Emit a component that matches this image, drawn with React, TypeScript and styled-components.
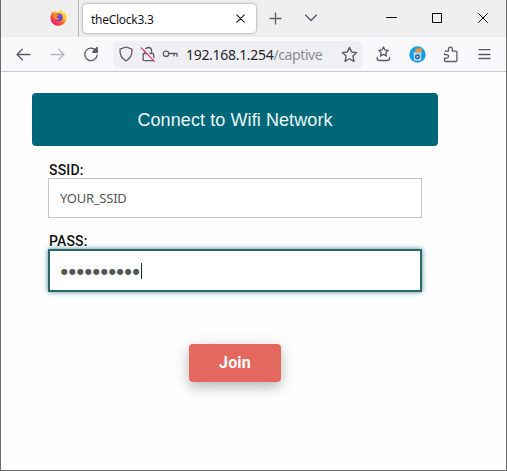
import React from "react";
import styled, { createGlobalStyle } from "styled-components";

const GlobalStyle = createGlobalStyle`
  body { margin: 0; overflow: hidden; background: #fff; }
  * { box-sizing: border-box; }
`;

const Window = styled.div`
  width: 507px;
  height: 471px;
  display: flex;
  flex-direction: column;
  background: #fefefe;
  border: solid #6b6b6b;
  border-width: 0 1px 1px 1px;
  overflow: hidden;
`;

const TabStrip = styled.div`
  flex: none;
  height: 37px;
  display: flex;
  align-items: flex-start;
  background: #efefef;
`;

const PinnedArea = styled.div`
  width: 78px;
  height: 37px;
  display: flex;
  padding: 9px 0 0 49px;
  border-right: 1px solid #b9b9b9;
`;

const Tab = styled.div`
  width: 173px;
  height: 29px;
  margin: 4px 0 0 4px;
  padding: 0 11px 0 8px;
  display: flex;
  align-items: center;
  justify-content: space-between;
  background: #fff;
  border-radius: 4px;
  box-shadow: 0 0 3px rgba(0, 0, 0, 0.42);
`;

const TabTitle = styled.span`
  font: 12px/16px "Noto Sans", sans-serif;
  letter-spacing: -0.27px;
  padding-top: 2px;
  color: #15141a;
`;

const Glyph = styled.svg<{ $left?: number; $top?: number }>`
  flex: none;
  display: block;
  margin-left: ${(p) => p.$left ?? 0}px;
  margin-top: ${(p) => p.$top ?? 0}px;
  fill: none;
  stroke: #5b5b66;
  stroke-width: 1.3;
  stroke-linecap: round;
  stroke-linejoin: round;
`;

const Toolbar = styled.div`
  flex: none;
  height: 35px;
  display: flex;
  align-items: center;
  background: #f9f9fb;
  border-bottom: 1px solid #cacaca;
`;

const AddressBar = styled.div`
  width: 249px;
  height: 27px;
  margin-left: 14px;
  padding-left: 5px;
  display: flex;
  align-items: center;
  background: #f0f0f4;
  border-radius: 4px;
`;

const Url = styled.div`
  width: 138px;
  margin-left: 8px;
  padding-top: 1px;
  white-space: nowrap;
  font: 14px/20px "Noto Sans", sans-serif;
  letter-spacing: -0.3px;
  color: #25242c;
`;

const UrlPath = styled.span`
  color: #8b8b93;
  letter-spacing: -0.4px;
`;

const Page = styled.main`
  flex: 1;
  padding: 21px 0 0 31px;
`;

const Banner = styled.h1`
  width: 406px;
  height: 53px;
  margin: 0 0 16px;
  border-radius: 4px;
  background: #006778;
  color: #ebf6f7;
  font: 400 18px/54px "Liberation Sans", Arial, sans-serif;
  letter-spacing: 0.09px;
  text-align: center;
`;

const Form = styled.div`
  width: 374px;
  margin-left: 16px;
  display: flex;
  flex-direction: column;
`;

const Label = styled.label<{ $spacing: number }>`
  height: 16px;
  padding-left: 1px;
  font: 500 14px/17px Roboto, sans-serif;
  letter-spacing: ${(p) => p.$spacing}px;
  color: #111;
`;

const Field = styled.div<{ $focused?: boolean }>`
  height: ${(p) => (p.$focused ? 43 : 40)}px;
  margin-bottom: ${(p) => (p.$focused ? 52 : 15)}px;
  padding-left: 11px;
  display: flex;
  align-items: center;
  background: #fff;
  border: ${(p) => (p.$focused ? "2px solid #2e666c" : "1px solid #c6c6c6")};
  box-shadow: ${(p) => (p.$focused ? "0 0 5px rgba(0, 103, 120, 0.75)" : "none")};
  font: 13px/16px "Noto Sans", sans-serif;
  letter-spacing: -0.25px;
  color: #555;
`;

const Mask = styled.span`
  width: 80px;
  padding: 2px 0 0;
  white-space: nowrap;
  font: 8px/16px "DejaVu Sans", sans-serif;
  letter-spacing: 1px;
`;

const Caret = styled.span`
  width: 1px;
  height: 16px;
  background: #222;
`;

const JoinButton = styled.button`
  align-self: flex-start;
  width: 92px;
  height: 38px;
  margin-left: 141px;
  padding: 0 0 1px;
  border: 0;
  border-radius: 4px;
  background: #e4685e;
  color: #fff;
  font: 700 16px/36px Roboto, sans-serif;
  letter-spacing: 0.2px;
  box-shadow: 0 5px 11px rgba(0, 0, 0, 0.18), 0 4px 20px rgba(0, 0, 0, 0.12);
`;

const FirefoxLogo = () => (
  <Glyph width="17" height="17" viewBox="0 0 16 16">
    <defs>
      <linearGradient id="flame" x1="0.85" y1="0.1" x2="0.2" y2="0.9">
        <stop offset="0" stopColor="#fff04a" />
        <stop offset="0.4" stopColor="#ffad25" />
        <stop offset="0.7" stopColor="#ff5038" />
        <stop offset="1" stopColor="#ed1b68" />
      </linearGradient>
    </defs>
    <g strokeWidth="0">
      <path d="M1.4 4.2 2.4 2 3.6 3.2 5.5 1.7 5.3 3 8.2 3 9.8 0.2C11 2 12.2 2.2 13 3.2L13.2 2.5C15.2 4.4 15.8 6.4 15.5 9 15 13 12 15.7 8 15.7 3.9 15.7.6 12.7.5 8.6.4 7 .8 5.5 1.4 4.2Z" fill="url(#flame)" />
      <circle cx="8.2" cy="7.9" r="3.7" fill="#7543d8" />
      <path d="M3.2 5.2C5 4 6.2 5 7.5 5.3L8.5 5.7C8 6.8 6.5 6.7 6.3 7.6 6.5 8.8 8 8.8 9 8.3 8.5 10 6.2 10.6 4.6 9.3L3 7Z" fill="#ff8b25" />
    </g>
  </Glyph>
);

const STAR = "M8 1.3 10 5.7 14.8 6.2 11.2 9.5 12.2 14.4 8 12 3.8 14.4 4.8 9.5 1.2 6.2 6 5.7Z";

export default function App() {
  return (
    <>
      <GlobalStyle />
      <Window>
        <TabStrip>
          <PinnedArea>
            <FirefoxLogo />
          </PinnedArea>
          <Tab>
            <TabTitle>theClock3.3</TabTitle>
            <Glyph width="9" height="9" viewBox="0 0 9 9">
              <path d="M.8.8 8.2 8.2M8.2.8.8 8.2" stroke="#222" strokeWidth="1.2" />
            </Glyph>
          </Tab>
          <Glyph width="13" height="13" $left={13} $top={12}>
            <path d="M6.5 1V12M1 6.5H12" />
          </Glyph>
          <Glyph width="14" height="8" $left={22} $top={14}>
            <path d="M1.5 1 7 6.5 12.5 1" />
          </Glyph>
          <Glyph width="11" height="11" $left={68} $top={12}>
            <path d="M.5 5.5H10.5" stroke="#000" strokeWidth="1" />
          </Glyph>
          <Glyph width="11" height="11" $left={35} $top={12}>
            <path d="M.5 1.5H9.5V10.5H.5V1.5Z" stroke="#000" strokeWidth="1" />
          </Glyph>
          <Glyph width="11" height="11" $left={35} $top={13}>
            <path d="M.5.5 9.5 9.5M9.5.5.5 9.5" stroke="#000" strokeWidth="1" />
          </Glyph>
        </TabStrip>

        <Toolbar>
          <Glyph width="15" height="13" $left={15}>
            <path d="M14 6.5H1M6.3 1.2 1 6.5 6.3 11.8" />
          </Glyph>
          <Glyph width="15" height="13" $left={19} opacity="0.42">
            <path d="M1 6.5H14M8.7 1.2 14 6.5 8.7 11.8" />
          </Glyph>
          <Glyph width="16" height="16" $left={18}>
            <path d="M13.5 5.5A6.2 6.2 0 1 0 14.2 9M14.2 1.5V6.3H9.7Z" />
            <path d="M14.3 1.5V6.3H9.7Z" fill="#5b5b66" strokeWidth=".5" />
          </Glyph>
          <AddressBar>
            <Glyph width="16" height="16">
              <path d="M8 1 14 3.2C14.3 8.8 12.5 12.5 8 15 3.5 12.5 1.7 8.8 2 3.2Z" />
            </Glyph>
            <Glyph width="16" height="17" $left={6}>
              <path d="M5 7V4.8A3.3 3.3 0 0 1 11.6 4.8V7M3.5 7.5H12.7A1 1 0 0 1 13.7 8.5V13.7A1 1 0 0 1 12.7 14.7H4.2A1 1 0 0 1 3.2 13.7V7.7" />
              <path d="M2.4 1.2 15.3 14.6" stroke="#f0f0f4" strokeWidth="1.4" />
              <path d="M1.3 1.8 14.3 15.3" stroke="#e6385b" strokeWidth="1.2" />
            </Glyph>
            <Glyph width="16" height="12" $left={6}>
              <circle cx="4" cy="5.8" r="2.7" />
              <path d="M7 5.5H15V8.3M12 5.5V7.7" />
            </Glyph>
            <Url>
              192.168.1.254<UrlPath>/captive</UrlPath>
            </Url>
            <Glyph width="17" height="17" viewBox="0 0 16 16" $left={17}>
              <path d={STAR} />
            </Glyph>
          </AddressBar>
          <Glyph width="15" height="16" $left={14}>
            <path d="M7.5 1 9 4 12.2 4.4 9.8 6.7 10.5 10.1 7.5 8.4 4.5 10.1 5.2 6.7 2.8 4.4 6 4Z" />
            <path d="M1.2 11.5V12.5A2 2 0 0 0 3.2 14.5H11.5A2 2 0 0 0 13.5 12.5V11.5" />
          </Glyph>
          <Glyph width="17" height="17" $left={18}>
            <g strokeWidth="0">
              <circle cx="8.5" cy="8.5" r="8.2" fill="#169eea" />
              <path d="M4.5 6H12.5L12 14.8H5Z" fill="#afd5ed" />
              <path d="M6 6 7 2.2 9 3 10.8 1.5 13 3 12.3 6.5H6Z" fill="#dd993f" />
            </g>
            <circle cx="8.5" cy="10.8" r="1.8" stroke="#14598c" strokeWidth="1.3" strokeDasharray="2.8 1" />
          </Glyph>
          <Glyph width="16" height="17" $left={17}>
            <path d="M2 5.1H5.5V3A1.9 1.9 0 0 1 9.3 3V5.1H12.9A1 1 0 0 1 13.9 6.1V14.5A1 1 0 0 1 12.9 15.5H2.5A1 1 0 0 1 1.5 14.5V12.1H3.8A1.7 1.7 0 0 0 3.8 8.6H1.5V7.7" />
          </Glyph>
          <Glyph width="13" height="11" $left={19}>
            <path d="M1 .5H12M1 5.5H12M1 9.5H12" />
          </Glyph>
        </Toolbar>

        <Page>
          <Banner>Connect to Wifi Network</Banner>
          <Form>
            <Label $spacing={0.2}>SSID:</Label>
            <Field>YOUR_SSID</Field>
            <Label $spacing={0.15}>PASS:</Label>
            <Field $focused>
              <Mask>●●●●●●●●●●</Mask>
              <Caret />
            </Field>
            <JoinButton>Join</JoinButton>
          </Form>
        </Page>
      </Window>
    </>
  );
}
